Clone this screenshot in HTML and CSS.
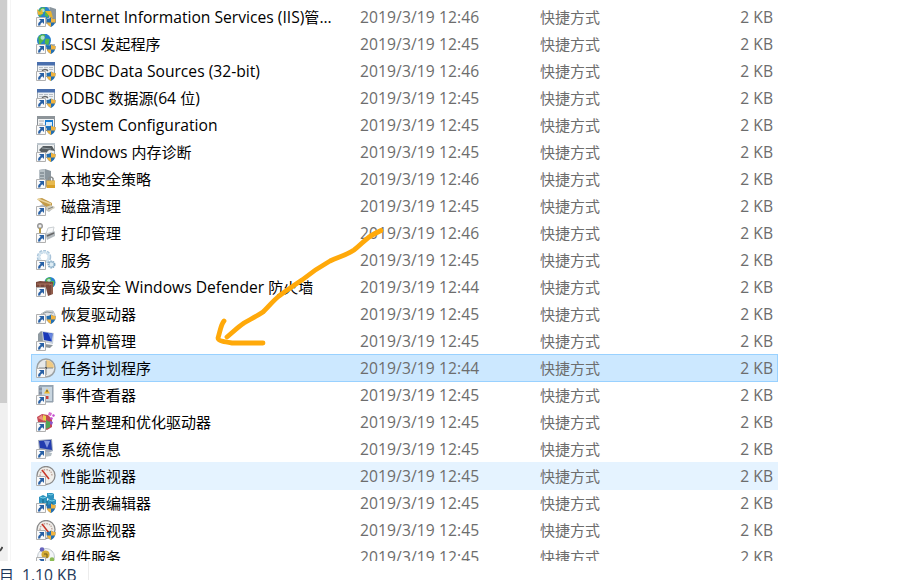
FILE: index.html
```html
<!DOCTYPE html>
<html lang="zh-CN">
<head>
<meta charset="utf-8">
<title>管理工具</title>
<link rel="stylesheet" href="styles.css">
</head>
<body>
<main class="explorer">
  <aside class="scrollbar"><div class="thumb"></div><svg class="chevron" viewBox="0 0 3 6"><path d="M0 5 2.5 1" stroke="#404040" stroke-width="1.8"/></svg></aside>
  <section class="list" id="list"></section>
</main>
<footer class="status"><span class="status-zh">目</span><span class="status-size latin">1.10 KB</span><i class="separator"></i></footer>
<svg class="annotation" viewBox="0 0 917 580" fill="none" stroke="#ffa90a" stroke-linecap="round" stroke-linejoin="round">
  <path stroke-width="4.8" d="M227 337C233 332 238 327 244 323C251 319 257 316 263 312C269 306 273 301 279 296C287 290 293 286 302 280C312 272 321 266 330 261C338 257 345 256 354 250C361 245 366 238 374 234L381 230.500"/>
  <path stroke-width="4.800" d="M224 321C221 324 220 332 218 338C218 341 225 342 232 343H263"/>
</svg>
<script src="list.js"></script>
</body>
</html>
```
FILE: styles.css
```css
body { margin: 0; width: 917px; height: 580px; overflow: hidden; position: relative; background: #fff; font-family: "Open Sans", "Noto Sans CJK SC", sans-serif; font-size: 15px; color: #000; display: flex; flex-direction: column; }
.explorer { display: flex; height: 561px; overflow: hidden; flex: none; }
.scrollbar { width: 7px; background: #f0f0f0; border-right: 1px solid #f3f3f3; flex: none; position: relative; }
.thumb { height: 403px; background: #cdcdcd; }
.chevron { position: absolute; left: 0; top: 546px; width: 3px; height: 6px; }
.list { width: 747px; margin-left: 2px; padding: 3px 0 0 20px; border-left: 1px solid #f5f5f5; flex: none; }
.row { box-sizing: border-box; height: 28px; margin-bottom: -1px; border: 1px solid transparent; display: grid; grid-template-columns: 25px 299px 180px 140px 93px; padding-left: 4px; align-items: center; white-space: nowrap; line-height: 26px; }
.selected { background: #cce8ff; border-color: #99d1ff; position: relative; }
.hover { background: #e5f3ff; }
.icon { width: 20px; height: 20px; display: block; }
.name, .type { height: 26px; }
.date, .type, .size { color: #6d6d6d; }
.size { text-align: right; }
.latin { font-size: 15.65px; }
.date { letter-spacing: .08px; }
.status { height: 19px; position: relative; overflow: hidden; display: flex; line-height: 28px; color: #1e395b; font-size: 15px; }
.status-zh { width: 23px; margin-left: -1px; }
.status-size { width: 66px; }
.separator { width: 1px; background: #ececec; }
.annotation { position: absolute; left: 0; top: 0; width: 917px; height: 580px; pointer-events: none; }
```
FILE: list.js
```js
const shield = '<path d="M15 10.500q2 1.600 4.500 1.500c0 4-1 6-4.500 8-3.500-2-4.500-4-4.500-8q2.500.1 4.500-1.500z" fill="#246eaf"/><path d="M15 10.500V15.500H19.200q.4-1.500.3-3.500-2.500.1-4.500-1.500zM15 15.500v4.500c-2.400-1.300-3.700-2.700-4.200-4.500z" fill="#f2b33d"/>';
const arrow = '<path d="M.5 10.500h9v9h-9z" fill="#fafafa" stroke="#b0b0b0"/><path d="M3 12h5v5l-1.700-1.700q-2 1-2.100 3.200H2q-.2-3 2.700-4.800z" fill="#2860a5"/>';
const windowArt = '<path d="M1.500 1.500h17v14h-17z" fill="#eef1f4" stroke="#98a2ab"/><path d="M1 1h18v3.500H1z" fill="#496fae"/><path d="M3 6.500h14M3 8.500h14" stroke="#b7bec6" stroke-dasharray="4 1"/><path d="M6 10q3-3 6 0" fill="none" stroke="#666" stroke-width="1.200"/>';
const server = (x) => `<path d="M${x} 1l6-1 6 2v14l-5 2-7-2z" fill="#8b969e"/><path d="M${x} 1l6-1v15l-6-1z" fill="#b8c1c7"/><path d="M${x + 1} 4h4m-4 3h4m-4 3h4" stroke="#66737b"/>`;
const globe = (x, y, r) => `<circle cx="${x}" cy="${y}" r="${r}" fill="#2781ce"/><path d="M${x - r * .8} ${y - r * .5}q${r * .5} ${-r * .6} ${r} ${-r * .3}l${-r * .2} ${r * .7} ${-r * .7} ${r * .8}zM${x + r * .2} ${y - r * .3}l${r * .6} ${r * .1}-${r * .2} ${r * .9}-${r * .5}-${r * .3}z" fill="#53b948"/><circle cx="${x - r * .2}" cy="${y - r * .4}" r="${r * .3}" fill="#c9ecf3" opacity=".8"/>`;
const gauge = '<circle cx="10" cy="9.500" r="9" fill="#f0eeea" stroke="#8a8a8a" stroke-width="1.300"/><path d="M4 10q0-6 6-6.500 6 .5 6 6.500" fill="none" stroke="#b59a90" stroke-width="1.200" stroke-dasharray="1.500 1"/><path d="M6 4l7 9" stroke="#c73627" stroke-width="1.500"/>';
const monitor = '<path d="M2 3l3-3 2 1v11l-5-1z" fill="#8f9aa1"/><path d="M6 0l12 2-1 11-10-2z" fill="#c5cfda"/><path d="M7 1l9.500 1.500-.8 8L8 9z" fill="#1838b8"/><path d="M12 2l4.500.6-.8 7.800z" fill="#6685df"/><path d="M9 13l8 1-3 3-6-1z" fill="#8b949a"/>';
const art = {
  iis: server(8) + globe(8, 6, 6.5) + '<path d="M1 2l3 3 2-3 1 5-5 1zM9 4l6 0 2 7-3-1z" fill="#e9b42f"/>' + arrow + shield,
  iscsi: '<path d="M1 10h18v5H1z" fill="#b2bac0"/>' + globe(8, 6.5, 7) + arrow + shield,
  odbc: windowArt + arrow + shield,
  config: '<path d="M1.500 1.500h17v14h-17z" fill="#f1f3f4" stroke="#888f95"/><path d="M1 1h18v3H1z" fill="#8d9499"/><path d="M3 6h5m-5 3h4" stroke="#aaa"/><path d="M9 5h8v8H9z" fill="#187bd1"/><path d="M10 7h6v4h-6z" fill="#d9ecfa"/>' + arrow + shield,
  memory: '<path d="M1.500 1.500h17v14h-17z" fill="#eef0f1" stroke="#a5adb2"/><path d="M1 1h18v2H1z" fill="#bec7ce"/><path d="M3 8l4-4h9l3 5-6-1-3 3-5-1z" fill="#555c60"/><path d="M6 6l9 1" stroke="#939da2"/>' + arrow + shield,
  policy: server(3) + '<path d="M12.500 12V9.500q2.500-3 4.500 0V12" fill="none" stroke="#8a8e90" stroke-width="1.500"/><path d="M10.500 11.500h8.500V19h-8.500z" fill="#d8a029"/><path d="M11 13h8m-8 2h8" stroke="#f5d276"/>' + arrow,
  cleanup: '<path d="M3 10l6-3 10 4-6 5z" fill="#bdc1c2"/><path d="M1 3l5-1 10 5v3l-6 1z" fill="#c29a48"/><path d="M2 3l13 5" stroke="#ead39b" stroke-width="1.500"/><path d="M10 11l5-2 4 3-7 3z" fill="#d5cfb8"/><path d="M12 13l5-2" stroke="#80858a"/>' + arrow,
  print: '<circle cx="4" cy="3" r="2.300" fill="#eee" stroke="#999" stroke-width="1.500"/><path d="M4 5v6" stroke="#b49a4b" stroke-width="2"/><path d="M9 10l8-3 2 2v4l-8 4z" fill="#b3babe"/><path d="M12 5l6-1-1 5-7 2z" fill="#f8f9fa" stroke="#cbd0d3"/><path d="M11 13l7-3" stroke="#666" stroke-width="1.500"/>' + arrow,
  services: '<circle cx="8" cy="7" r="5.500" fill="none" stroke="#a9c4da" stroke-width="3.500" stroke-dasharray="2.500 1"/><circle cx="8" cy="7" r="5" fill="none" stroke="#d1e3ef" stroke-width="2"/><circle cx="15.500" cy="14.500" r="3" fill="#deedf5" stroke="#84a9c4" stroke-width="2" stroke-dasharray="1.500 .6"/>' + arrow,
  firewall: globe(14, 5.5, 5.5) + '<path d="M0 5l4-1 13 1v12l-5 2-2-8H0z" fill="#78483b"/><path d="M1 7h13m-10 0v3m5-3v4m4-3l3-1v10" stroke="#aa7461" fill="none"/>' + arrow,
  recovery: '<path d="M5 10l5-3h7l2 4v5H8z" fill="#e1e4e6" stroke="#b3b9bc"/><path d="M7 9.500l4-1.500 6 1" fill="none" stroke="#8d969b"/>' + arrow + shield,
  computer: monitor + arrow,
  scheduler: '<circle cx="10" cy="10" r="9" fill="#e7e9e9" stroke="#9ba1a4" stroke-width="1.500"/><path d="M10 10V2a8 8 0 0 1 8 8z" fill="#f0ca82"/><path d="M10 3v14M3 10h14" stroke="#828a8e"/><circle cx="10" cy="10" r="1" fill="#444"/>' + arrow,
  events: '<path d="M3 1l3-1h11v17H3z" fill="#9bacbc" stroke="#8f9ba6"/><path d="M6 2h10v14H6z" fill="#c9d6e0"/><path d="M11 3.500l3 5H8z" fill="#edb831"/><path d="M11 5v2" stroke="#443"/><path d="M10 11h2.500v3H10z" fill="#cc4038"/><path d="M3 4h3m-3 4h3" stroke="#778"/>' + arrow,
  defrag: '<path d="M1 5l5-3 6 1 4 4v8l-5 3-8-3z" fill="#c44855"/><path d="M2 6l4-3 2 6z" fill="#ed9084"/><path d="M7 3l3 1v5l-3-1z" fill="#e9d34e"/><path d="M10 8l4 2v5l-4 2z" fill="#52a656"/><path d="M13 0l3 1-1 3-3-1z" fill="#d76bce"/><path d="M17 2l2 1-1 2-2-1zM15 5l2 1-1 2-2-1z" fill="#c451d0"/><path d="M14 9l3 1-1 3-2-1z" fill="#8b55cd"/>' + arrow,
  info: '<path d="M2 1l14-1 1 12-5 2-9-3z" fill="#9ca7b9"/><path d="M3 2l12-1 1 10-12-2z" fill="#233caf"/><path d="M8 2l6 0-3 7z" fill="#879ae0"/><path d="M10 13l6 1-1 3-7 1z" fill="#b4bec3"/>' + arrow,
  perf: gauge + arrow,
  registry: '<path d="M11 0l4-1 3 2v4l-3 2-4-2zM3 4l4-2 4 2v4l2-2 4-1 3 2v4l-4 2H6l-3-3z" fill="#2d92be"/><path d="M12 1l3 1 2-1M4 4l3 1 3-1M13 7l3 1 3-1M5 10l3 1 3-1" stroke="#79d0e6" fill="none"/><path d="M7 6v5m4-3v4m5-3v4" stroke="#176486" fill="none"/>' + arrow + shield,
  resource: gauge + arrow + shield,
  component: '<circle cx="10" cy="10" r="8.500" fill="#f2f4f6" stroke="#c1c9cf"/><circle cx="6" cy="2.500" r="2.300" fill="#6764bd"/><circle cx="9.500" cy="7.500" r="4" fill="#d3aa35"/><path d="M8 7h3v4" stroke="#715b1b" fill="none"/><circle cx="16" cy="12.500" r="2.300" fill="#8bbb53"/>' + arrow
};
const rows = [
  ['iis', 'Internet Information Services (IIS)管...', '46'],
  ['iscsi', 'iSCSI 发起程序', '45'],
  ['odbc', 'ODBC Data Sources (32-bit)', '46'],
  ['odbc', 'ODBC 数据源(64 位)', '45'],
  ['config', 'System Configuration', '45'],
  ['memory', 'Windows 内存诊断', '45'],
  ['policy', '本地安全策略', '46'],
  ['cleanup', '磁盘清理', '45'],
  ['print', '打印管理', '46'],
  ['services', '服务', '45'],
  ['firewall', '高级安全 Windows Defender 防火墙', '44'],
  ['recovery', '恢复驱动器', '45'],
  ['computer', '计算机管理', '45'],
  ['scheduler', '任务计划程序', '44', 'selected'],
  ['events', '事件查看器', '45'],
  ['defrag', '碎片整理和优化驱动器', '45'],
  ['info', '系统信息', '45'],
  ['perf', '性能监视器', '45', 'hover'],
  ['registry', '注册表编辑器', '45'],
  ['resource', '资源监视器', '45'],
  ['component', '组件服务', '45']
];
const sizeLatin = (text) => text.replace(/[\x20-\x7e]+/g, '<span class="latin">$&</span>');
document.getElementById('list').innerHTML = rows.map(([icon, name, minute, state = '']) =>
  `<div class="row ${state}"><svg class="icon" viewBox="0 0 20 20">${art[icon]}</svg><span class="name">${sizeLatin(name)}</span><span class="date latin">2019/3/19 12:${minute}</span><span class="type">快捷方式</span><span class="size latin">2 KB</span></div>`
).join('');
```
